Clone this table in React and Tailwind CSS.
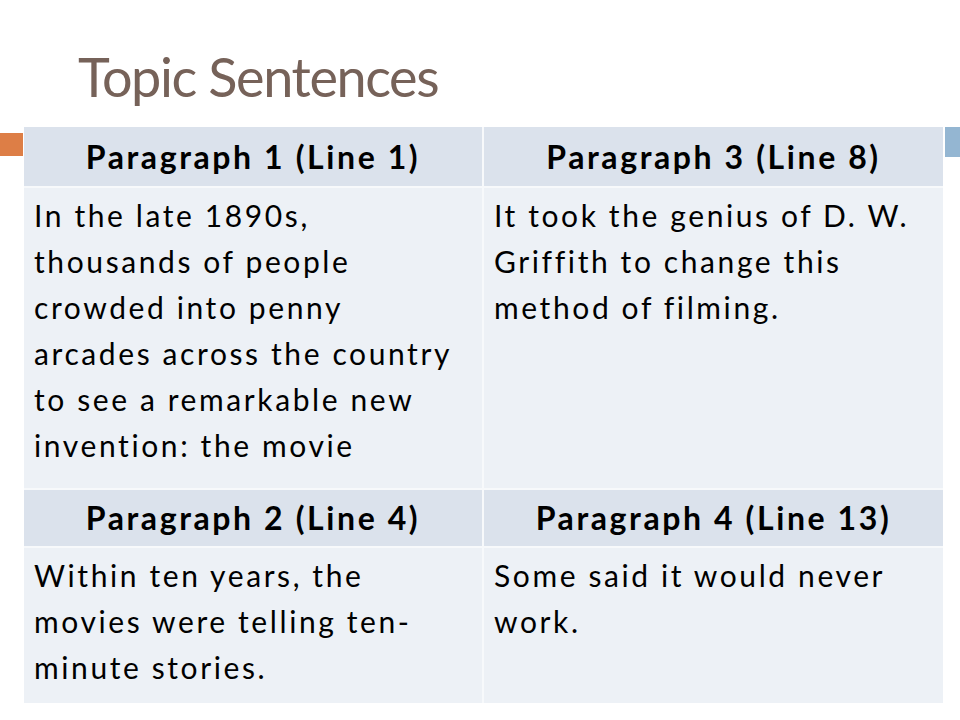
import React from "react";

const font = { fontFamily: "Lato, 'Open Sans', sans-serif" };

function Header({ children }) {
  return (
    <div className="flex items-center justify-center bg-[#dbe2ec] text-[32px] font-bold text-black tracking-[2.6px]">
      {children}
    </div>
  );
}

function Body({ lines }) {
  return (
    <div className="bg-[#edf1f6] pl-[10px] pt-[4px] text-[30px] leading-[46px] text-black tracking-[2.6px]">
      {lines.map((l, i) => (
        <div key={i} className="whitespace-nowrap">
          {l}
        </div>
      ))}
    </div>
  );
}

export default function App() {
  return (
    <div className="w-[960px] h-[720px] bg-white overflow-hidden" style={font}>
      <div className="h-[127px] pl-[78px] pt-[44px]">
        <div className="text-[54px] leading-[65px] tracking-[-1.4px] text-[#766259]">Topic Sentences</div>
      </div>
      <div className="flex items-start">
        <div className="w-[23px] h-[23px] mt-[6px] bg-[#dd7e46]" />
        <div className="ml-[1px] grid grid-cols-[458px_459px] grid-rows-[59px_300px_56px_155px] gap-[2px] bg-[#f7f9fb]">
          <Header>Paragraph 1 (Line 1)</Header>
          <Header>Paragraph 3 (Line 8)</Header>
          <Body
            lines={[
              "In the late 1890s,",
              "thousands of people",
              "crowded into penny",
              "arcades across the country",
              "to see a remarkable new",
              "invention: the movie",
            ]}
          />
          <Body
            lines={[
              "It took the genius of D. W.",
              "Griffith to change this",
              "method of filming.",
            ]}
          />
          <Header>Paragraph 2 (Line 4)</Header>
          <Header>Paragraph 4 (Line 13)</Header>
          <Body
            lines={[
              "Within ten years, the",
              "movies were telling ten-",
              "minute stories.",
            ]}
          />
          <Body lines={["Some said it would never", "work."]} />
        </div>
        <div className="ml-[2px] w-[15px] h-[30px] bg-[#94b6d2]" />
      </div>
    </div>
  );
}
